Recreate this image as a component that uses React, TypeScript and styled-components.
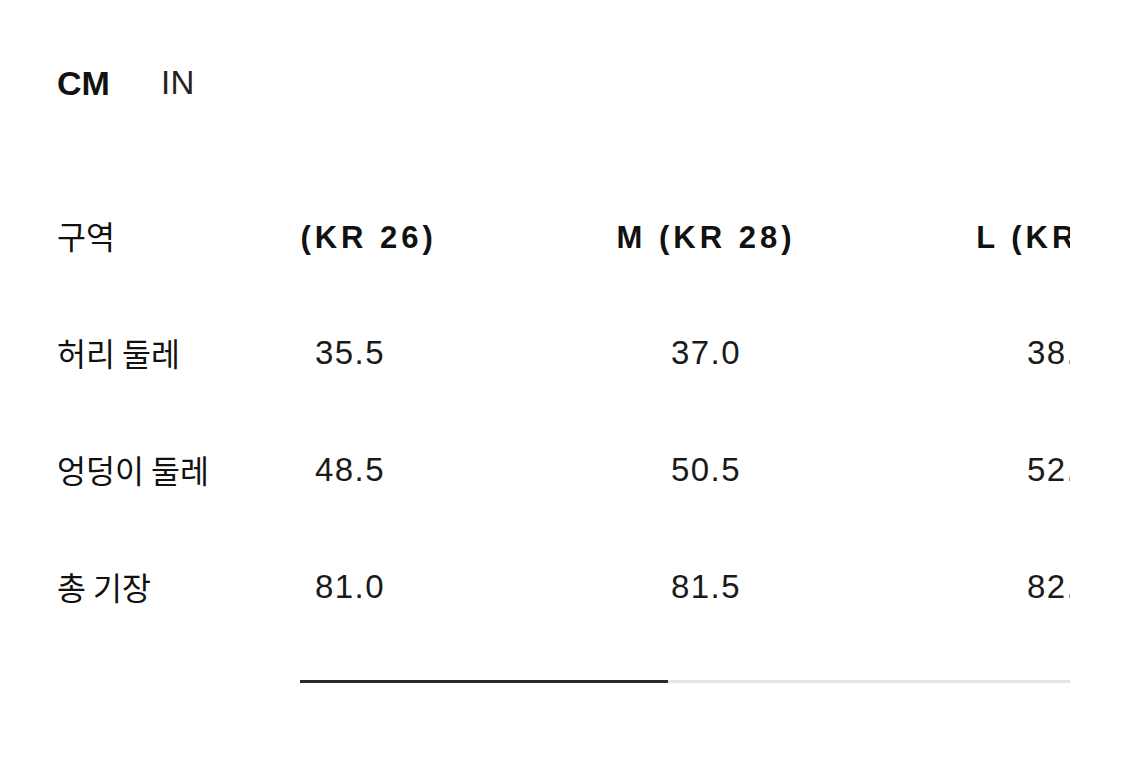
import styled, { createGlobalStyle } from 'styled-components';

const GlobalStyle = createGlobalStyle`
  html, body {
    margin: 0;
    padding: 0;
    background: #ffffff;
  }
  body {
    font-family: 'Liberation Sans', 'Noto Sans CJK KR', sans-serif;
    color: #111111;
  }
`;

const Page = styled.div`
  width: 1125px;
  height: 779px;
  padding: 0 0 0 57px;
  box-sizing: border-box;
  overflow: hidden;
`;

const UnitToggle = styled.div`
  display: flex;
  align-items: center;
  gap: 51px;
  height: 60px;
  margin-top: 53px;
`;

const UnitButton = styled.span<{ $active: boolean }>`
  font-family: 'Liberation Sans', sans-serif;
  font-size: ${(p) => (p.$active ? '34px' : '33px')};
  font-weight: ${(p) => (p.$active ? 700 : 400)};
  color: ${(p) => (p.$active ? '#111' : '#222')};
  letter-spacing: ${(p) => (p.$active ? '0' : '0.5px')};
  cursor: pointer;
`;

const Table = styled.div`
  display: flex;
  margin-top: 66px;
`;

const LabelColumn = styled.div`
  display: flex;
  flex-direction: column;
  width: 243px;
  flex-shrink: 0;
`;

const Cell = styled.div<{ $align?: 'start' | 'center' }>`
  height: 117px;
  display: flex;
  align-items: center;
  justify-content: ${(p) => (p.$align === 'start' ? 'flex-start' : 'center')};
  white-space: nowrap;
`;

const Label = styled.span`
  font-family: 'Noto Sans CJK KR', sans-serif;
  font-size: 31.5px;
  font-weight: 400;
  color: #111;
  padding-bottom: 6px;
`;

const ScrollArea = styled.div`
  width: 770px;
  overflow: hidden;
  flex-shrink: 0;
`;

const Track = styled.div`
  display: flex;
  margin-left: -128px;
`;

const SizeColumn = styled.div`
  display: flex;
  flex-direction: column;
  width: 356px;
  flex-shrink: 0;
`;

const SizeHeader = styled.span`
  font-family: 'Liberation Sans', sans-serif;
  font-size: 31px;
  font-weight: 700;
  letter-spacing: 4px;
  color: #111;
`;

const Value = styled.span`
  font-family: 'Liberation Sans', sans-serif;
  font-size: 33px;
  font-weight: 400;
  letter-spacing: 1.5px;
  color: #1a1a1a;
  padding-bottom: 4px;
`;

const ScrollBar = styled.div`
  margin: 33px 0 0 243px;
  width: 770px;
  height: 3px;
  background: #e3e3e3;
  display: flex;
`;

const Thumb = styled.div`
  width: 368px;
  height: 100%;
  background: #2a2a2a;
`;

const labels = ['구역', '허리 둘레', '엉덩이 둘레', '총 기장'];

const sizes = [
  { name: 'S (KR 26)', values: ['35.5', '48.5', '81.0'] },
  { name: 'M (KR 28)', values: ['37.0', '50.5', '81.5'] },
  { name: 'L (KR 30)', values: ['38.5', '52.5', '82.0'] },
  { name: 'XL (KR 32)', values: ['40.0', '54.5', '82.5'] },
];

export default function App() {
  return (
    <Page>
      <GlobalStyle />
      <UnitToggle>
        <UnitButton $active>CM</UnitButton>
        <UnitButton $active={false}>IN</UnitButton>
      </UnitToggle>
      <Table>
        <LabelColumn>
          {labels.map((l) => (
            <Cell key={l} $align="start">
              <Label>{l}</Label>
            </Cell>
          ))}
        </LabelColumn>
        <ScrollArea>
          <Track>
            {sizes.map((s) => (
              <SizeColumn key={s.name}>
                <Cell>
                  <SizeHeader>{s.name}</SizeHeader>
                </Cell>
                {s.values.map((v, i) => (
                  <Cell key={i}>
                    <Value>{v}</Value>
                  </Cell>
                ))}
              </SizeColumn>
            ))}
          </Track>
        </ScrollArea>
      </Table>
      <ScrollBar>
        <Thumb />
      </ScrollBar>
    </Page>
  );
}
